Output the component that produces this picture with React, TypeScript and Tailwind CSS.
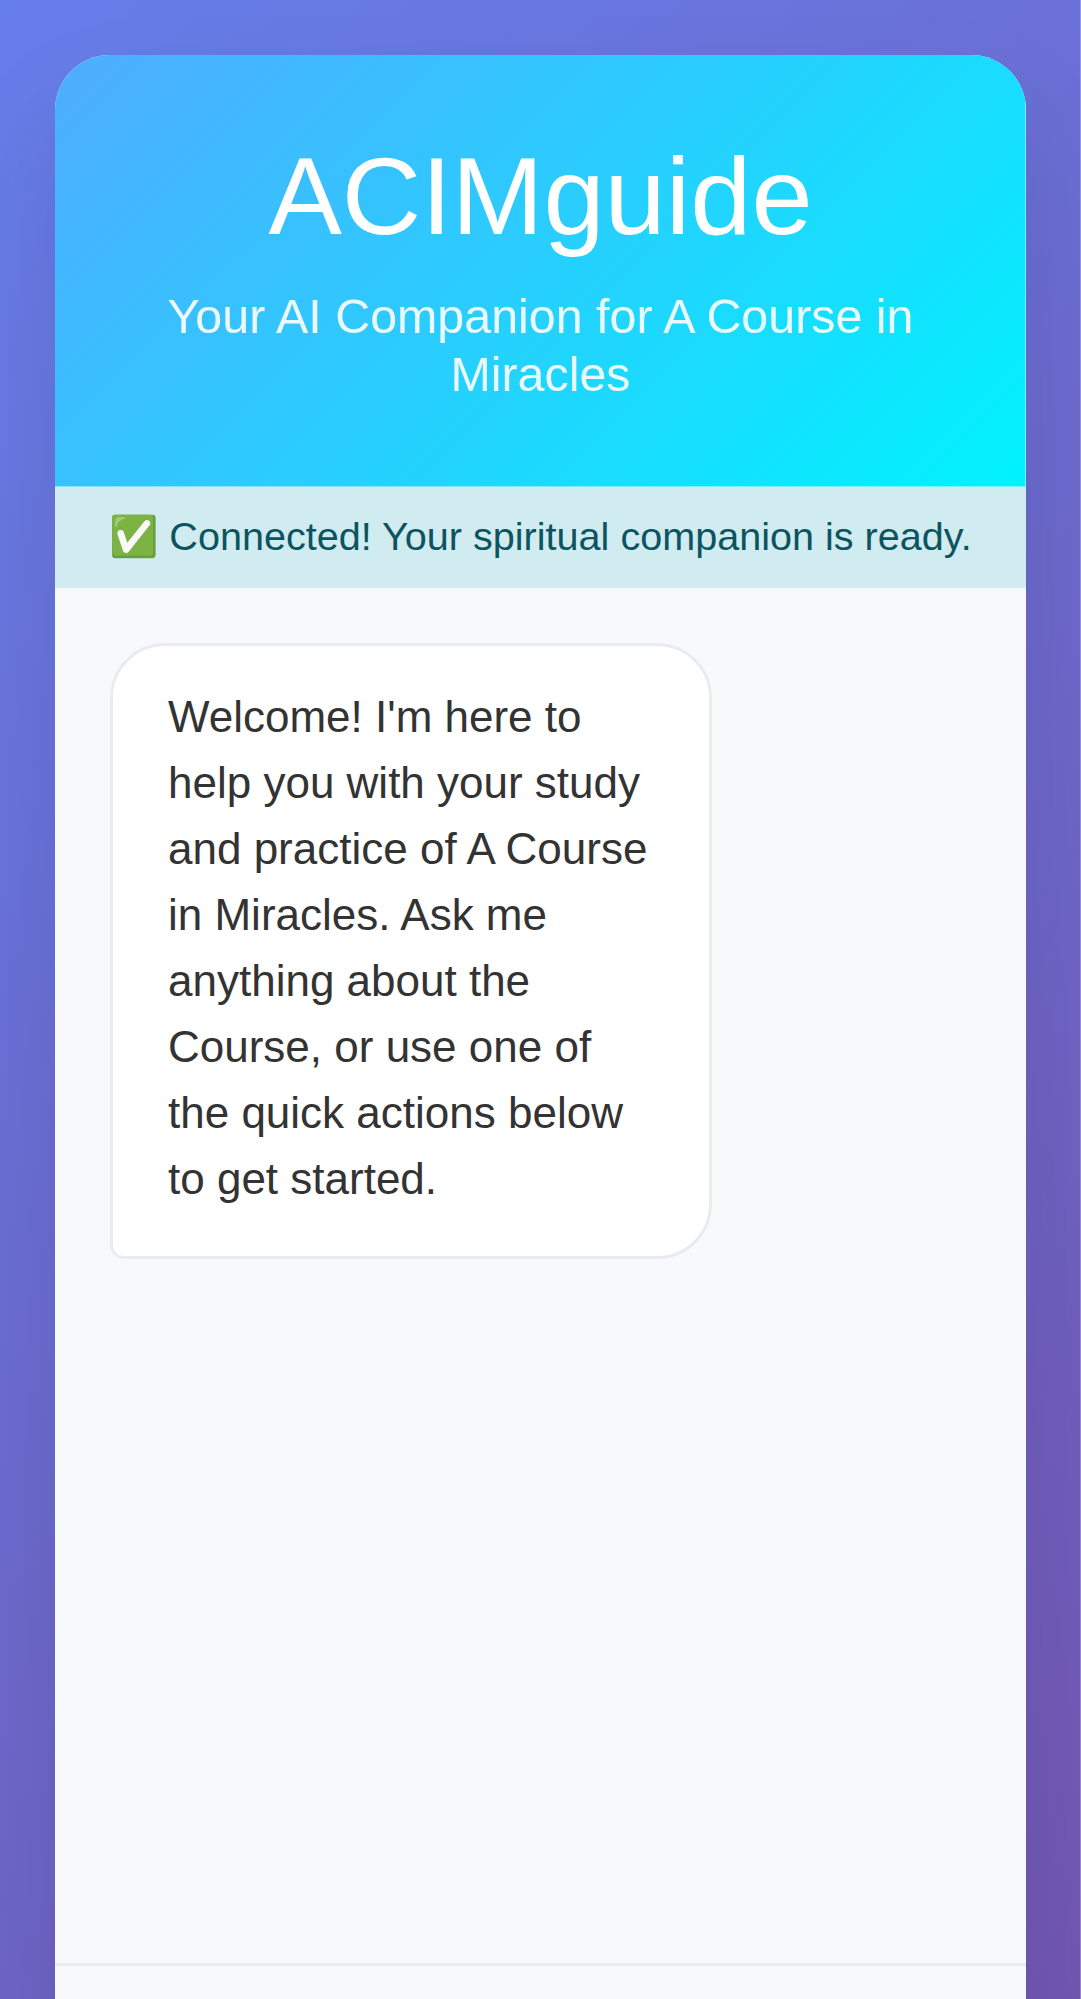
export default function App() {
  return (
    <div className="h-[1999px] overflow-hidden">
      <div className="h-[2900px] border-r border-white/30 bg-[linear-gradient(135deg,#667eea_0%,#764ba2_100%)] bg-origin-border p-[55px] pr-[54px] font-['Liberation_Sans',Arial,sans-serif] text-[#333]">
        <div className="flex h-[2790px] w-[971px] flex-col overflow-hidden rounded-[55px] bg-white shadow-[0_55px_110px_rgba(0,0,0,0.1)]">
          <header className="h-[432px] shrink-0 border-r border-b border-white/45 bg-[linear-gradient(135deg,#4facfe_0%,#00f2fe_100%)] bg-origin-border pt-[82px] pr-[81.5px] pl-[82.5px] text-center text-white">
            <h1 className="mb-[32px] text-[110px] leading-[118px] font-light">ACIMguide</h1>
            <p className="text-[48.4px] leading-[58px] opacity-90">Your AI Companion for A Course in Miracles</p>
          </header>
          <div className="flex h-[101px] shrink-0 items-center justify-center bg-[#d1ecf1] pb-[2px] text-[39.6px] whitespace-nowrap text-[#0c5460]">
            ✅ Connected! Your spiritual companion is ready.
          </div>
          <main className="h-[1375px] shrink-0 bg-[#f8f9fa] p-[55px]">
            <div className="h-[616px] w-[602px] rounded-[55px] rounded-bl-[14px] border-3 border-[#e9ecef] bg-white px-[55px] pt-[38px] text-[44px] leading-[66px]">
              Welcome! I'm here to help you with your study and practice of A Course in Miracles. Ask me anything about the Course, or use one of the quick actions below to get started.
            </div>
          </main>
          <footer className="grow border-t-3 border-[#e9ecef] bg-[#f8f9fa]" />
        </div>
      </div>
    </div>
  );
}
